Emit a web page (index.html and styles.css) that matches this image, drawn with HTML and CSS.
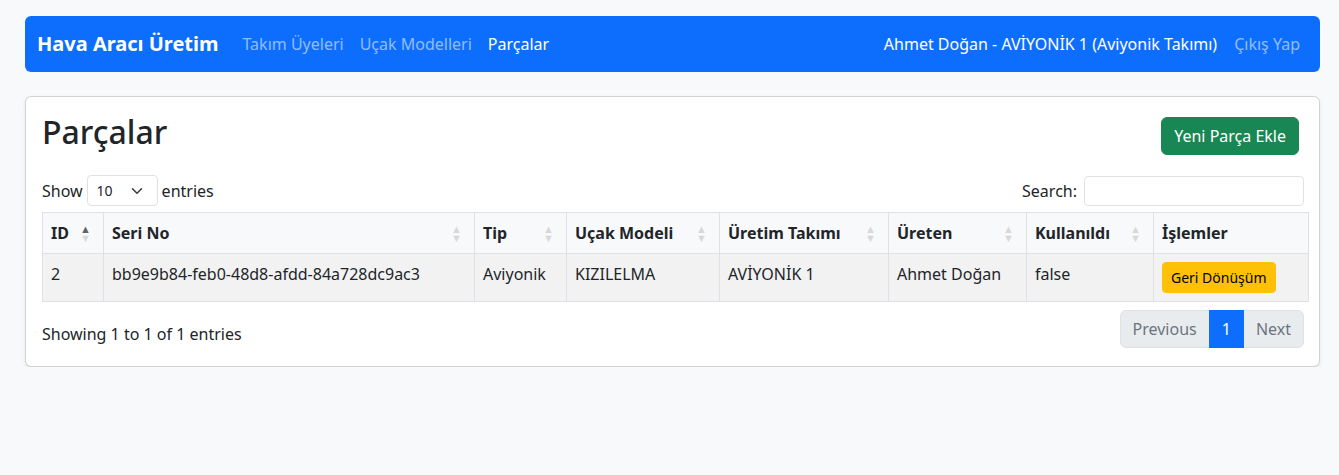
FILE: index.html
```html
<!DOCTYPE html>
<html lang="tr">
<head>
<meta charset="utf-8">
<title>Parçalar</title>
<link rel="stylesheet" href="styles.css">
</head>
<body>
<div class="wrap">
  <nav class="navbar">
    <div class="nav-left">
      <span class="brand">Hava Aracı Üretim</span>
      <a class="nav-link">Takım Üyeleri</a>
      <a class="nav-link">Uçak Modelleri</a>
      <a class="nav-link active">Parçalar</a>
    </div>
    <div class="nav-right">
      <span class="nav-text">Ahmet Doğan - AVİYONİK 1 (Aviyonik Takımı)</span>
      <a class="nav-link">Çıkış Yap</a>
    </div>
  </nav>

  <div class="card">
    <div class="card-head">
      <h2 class="title">Parçalar</h2>
      <button class="btn btn-success">Yeni Parça Ekle</button>
    </div>

    <div class="dt-top">
      <div class="length">
        <span>Show</span>
        <div class="select">
          <span>10</span>
          <svg class="chev" width="12" height="12" viewBox="0 0 16 16"><path d="M2 5l6 6 6-6" fill="none" stroke="#343a40" stroke-width="2" stroke-linecap="round" stroke-linejoin="round"/></svg>
        </div>
        <span>entries</span>
      </div>
      <div class="filter">
        <span>Search:</span>
        <div class="input"></div>
      </div>
    </div>

    <table class="dt">
      <thead>
        <tr>
          <th class="c-id sort asc">ID</th>
          <th class="c-seri sort">Seri No</th>
          <th class="c-tip sort">Tip</th>
          <th class="c-model sort">Uçak Modeli</th>
          <th class="c-takim sort">Üretim Takımı</th>
          <th class="c-ureten sort">Üreten</th>
          <th class="c-kul sort">Kullanıldı</th>
          <th class="c-islem">İşlemler</th>
        </tr>
      </thead>
      <tbody>
        <tr class="odd">
          <td>2</td>
          <td>bb9e9b84-feb0-48d8-afdd-84a728dc9ac3</td>
          <td>Aviyonik</td>
          <td>KIZILELMA</td>
          <td>AVİYONİK 1</td>
          <td>Ahmet Doğan</td>
          <td>false</td>
          <td><button class="btn btn-warning btn-sm">Geri Dönüşüm</button></td>
        </tr>
      </tbody>
    </table>

    <div class="dt-bottom">
      <div class="info">Showing 1 to 1 of 1 entries</div>
      <ul class="pagination">
        <li class="pg-item disabled">Previous</li>
        <li class="pg-item active">1</li>
        <li class="pg-item disabled">Next</li>
      </ul>
    </div>
  </div>
</div>
</body>
</html>
```

FILE: styles.css
```css
* { box-sizing: border-box; }
html, body { margin: 0; }
body {
  background: #f8f9fa;
  font-family: "Noto Sans", "Open Sans", sans-serif;
  font-size: 16px;
  line-height: 1.5;
  color: #212529;
}
.wrap {
  width: 1295px;
  margin-left: 25px;
  padding-top: 16px;
}
.navbar {
  height: 56px;
  background: #0d6efd;
  border-radius: 6px;
  display: flex;
  align-items: center;
  justify-content: space-between;
  padding: 0 12px;
  margin-bottom: 24px;
}
.nav-left, .nav-right { display: flex; align-items: center; }
.brand {
  color: #fff;
  font-size: 20px;
  font-weight: 700;
  margin-right: 16px;
  line-height: 30px;
}
.nav-link {
  color: rgba(255,255,255,.55);
  padding: 8px;
  text-decoration: none;
}
.nav-link.active { color: #fff; }
.nav-text { color: #fff; padding: 8px 0; margin-right: 9px; }

.card {
  background: #fff;
  border: 1px solid rgba(0,0,0,.175);
  border-radius: 6px;
  box-shadow: 0 .125rem .25rem rgba(0,0,0,.075);
  padding: 16px;
}
.card-head {
  display: flex;
  justify-content: space-between;
  align-items: center;
  margin-bottom: 16px;
  padding-right: 4px;
}
.title {
  margin: 0 0 8px 0;
  font-size: 32px;
  font-weight: 500;
  line-height: 1.2;
}
.btn {
  font-family: inherit;
  border: 1px solid transparent;
  border-radius: 6px;
  font-size: 16px;
  line-height: 1.5;
  padding: 6px 12px;
  cursor: pointer;
}
.btn-success { background: #198754; border-color: #198754; color: #fff; }
.btn-warning { background: #ffc107; border-color: #ffc107; color: #000; }
.btn-sm { font-size: 14px; padding: 4px 8px; border-radius: 4px; }

.dt-top {
  display: flex;
  justify-content: space-between;
  align-items: center;
  height: 31px;
}
.length, .filter { display: flex; align-items: center; }
.select {
  margin: 0 4px 0 4px;
  width: 71px;
  height: 31px;
  border: 1px solid #dee2e6;
  border-radius: 4px;
  font-size: 14px;
  display: flex;
  align-items: center;
  justify-content: space-between;
  padding: 0 14px 0 9px;
}
.chev { display: block; }
.filter { margin-right: -1px; }
.input {
  margin-left: 7px;
  width: 220px;
  height: 30px;
  border: 1px solid #dee2e6;
  border-radius: 4px;
}

table.dt {
  margin-top: 6px;
  margin-bottom: 6px;
  width: 1266px;
  border-collapse: collapse;
  table-layout: fixed;
}
.dt th, .dt td {
  border: 1px solid #dee2e6;
  padding: 8px;
  text-align: left;
  vertical-align: top;
}
.dt th {
  font-weight: 700;
  background: #f8f9fa;
  position: relative;
  padding-right: 26px;
}
.dt tbody tr.odd td { background: #f2f2f2; }
.c-id { width: 61px; }
.c-seri { width: 371px; }
.c-tip { width: 92px; }
.c-model { width: 153px; }
.c-takim { width: 169px; }
.c-ureten { width: 138px; }
.c-kul { width: 127px; }
.c-islem { width: 155px; }
.dt th.sort::before,
.dt th.sort::after {
  position: absolute;
  right: 12px;
  font-size: 11px;
  line-height: 9px;
  color: #000;
  opacity: .125;
}
.dt th.sort::before { content: "▲"; bottom: 50%; }
.dt th.sort::after { content: "▼"; top: 50%; }
.dt th.sort.asc::before { opacity: .6; }

.dt-bottom {
  display: flex;
  justify-content: space-between;
  align-items: flex-start;
  margin-right: -1px;
}
.info { padding-top: 13.6px; }
.pagination {
  list-style: none;
  margin: 2px 0;
  padding: 0;
  display: flex;
}
.pg-item {
  padding: 6px 12px;
  border: 1px solid #dee2e6;
  margin-left: -1px;
  color: #6c757d;
  background: #e9ecef;
}
.pg-item:first-child { border-radius: 6px 0 0 6px; margin-left: 0; }
.pg-item:last-child { border-radius: 0 6px 6px 0; }
.pg-item.active { background: #0d6efd; border-color: #0d6efd; color: #fff; position: relative; }
```
